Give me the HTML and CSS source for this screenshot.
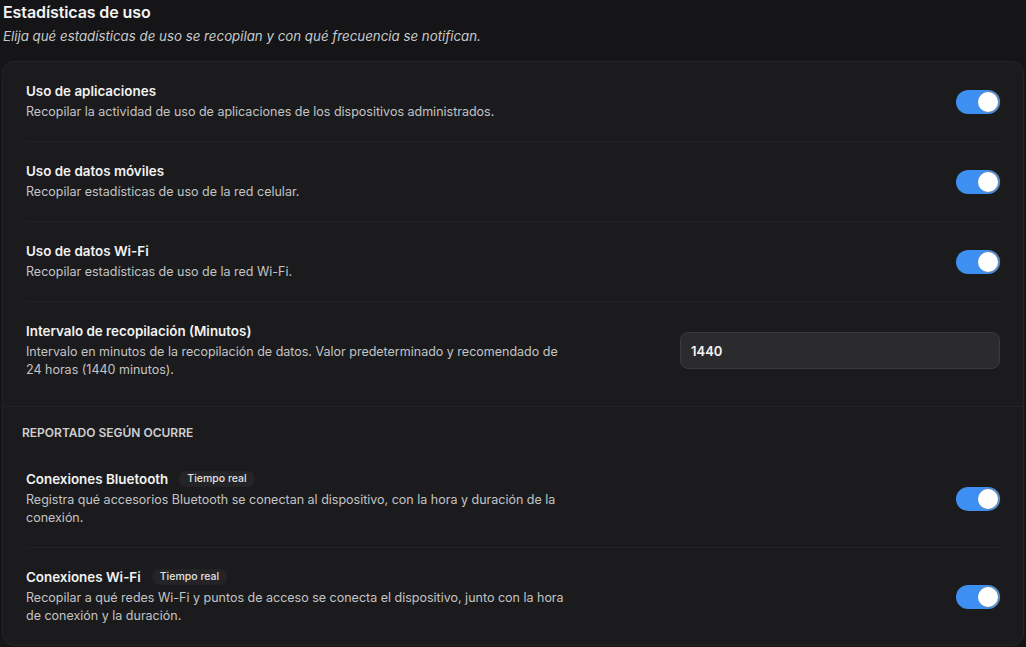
FILE: index.html
```
<!DOCTYPE html>
<html lang="es">
<head>
<meta charset="utf-8">
<title>Estadísticas de uso</title>
<link rel="stylesheet" href="styles.css">
</head>
<body>
<header class="page-head">
  <h1 class="page-title">Estadísticas de uso</h1>
  <p class="page-sub">Elija qué estadísticas de uso se recopilan y con qué frecuencia se notifican.</p>
</header>
<main class="card">
  <section class="section first">
    <div class="row">
      <div class="text">
        <div class="title">Uso de aplicaciones</div>
        <div class="desc">Recopilar la actividad de uso de aplicaciones de los dispositivos administrados.</div>
      </div>
      <span class="toggle"><span class="knob"></span></span>
    </div>
    <div class="row">
      <div class="text">
        <div class="title">Uso de datos móviles</div>
        <div class="desc">Recopilar estadísticas de uso de la red celular.</div>
      </div>
      <span class="toggle"><span class="knob"></span></span>
    </div>
    <div class="row">
      <div class="text">
        <div class="title">Uso de datos Wi-Fi</div>
        <div class="desc">Recopilar estadísticas de uso de la red Wi-Fi.</div>
      </div>
      <span class="toggle"><span class="knob"></span></span>
    </div>
    <div class="row">
      <div class="text">
        <div class="title">Intervalo de recopilación (Minutos)</div>
        <div class="desc">Intervalo en minutos de la recopilación de datos. Valor predeterminado y recomendado de 24 horas (1440 minutos).</div>
      </div>
      <div class="input">1440</div>
    </div>
  </section>
  <section class="section second">
    <div class="section-label">REPORTADO SEGÚN OCURRE</div>
    <div class="row">
      <div class="text">
        <div class="title">Conexiones Bluetooth <span class="badge">Tiempo real</span></div>
        <div class="desc">Registra qué accesorios Bluetooth se conectan al dispositivo, con la hora y duración de la conexión.</div>
      </div>
      <span class="toggle"><span class="knob"></span></span>
    </div>
    <div class="row">
      <div class="text">
        <div class="title">Conexiones Wi-Fi <span class="badge">Tiempo real</span></div>
        <div class="desc">Recopilar a qué redes Wi-Fi y puntos de acceso se conecta el dispositivo, junto con la hora de conexión y la duración.</div>
      </div>
      <span class="toggle"><span class="knob"></span></span>
    </div>
  </section>
</main>
</body>
</html>
```
FILE: styles.css
```
* { box-sizing: border-box; }
html, body { margin: 0; padding: 0; }
body {
  background: #151517;
  color: #f0f0f0;
  font-family: Inter, "Noto Sans", sans-serif;
  padding: 2px 3px 0 2px;
  height: 647px;
  overflow: hidden;
}
.page-head { padding-left: 1px; }
.page-title {
  margin: 0;
  font-size: 16px;
  font-weight: 600;
  line-height: 20px;
  color: #f4f4f4;
  letter-spacing: -0.1px;
}
.page-sub {
  margin: 5px 0 0;
  font-size: 13.3px;
  font-style: italic;
  line-height: 18px;
  color: #c9c9cb;
}
.card {
  margin-top: 16px;
  background: #1b1b1d;
  border: 1px solid #242426;
  border-radius: 12px;
  width: 1022px;
}
.section.first { padding-bottom: 7px; }
.section.second { border-top: 1px solid #232325; padding-top: 19px; }
.section-label {
  margin-left: 19px;
  font-size: 12px;
  font-weight: 600;
  line-height: 14px;
  color: #cfcfd1;
  margin-bottom: 10px;
}
.row {
  display: flex;
  align-items: center;
  justify-content: space-between;
  margin: 0 23px 0 23px;
  padding: 20px 0;
  border-bottom: 1px solid #232325;
}
.section .row:last-child { border-bottom: none; }
.text { max-width: 545px; }
.title {
  font-size: 13.4px;
  font-weight: 600;
  line-height: 18px;
  color: #f2f2f2;
  display: flex;
  align-items: center;
}
.desc {
  margin-top: 3px;
  font-size: 12.5px;
  line-height: 18px;
  color: #c3c3c5;
}
.badge {
  display: inline-block;
  margin-left: 11px;
  padding: 0 8px;
  height: 16px;
  line-height: 16px;
  font-size: 10.5px;
  font-weight: 500;
  color: #e2e2e4;
  background: #242426;
  border-radius: 8px;
}
.toggle {
  flex: none;
  width: 44px;
  height: 24px;
  border-radius: 12px;
  background: #3d8ff2;
  display: flex;
  align-items: center;
  justify-content: flex-end;
  padding-right: 2px;
}
.knob {
  width: 20px;
  height: 20px;
  border-radius: 50%;
  background: #ffffff;
  box-shadow: 1px 0 1px 1px rgba(120, 135, 160, 0.7);
}
.input {
  flex: none;
  width: 320px;
  height: 37px;
  background: #2b2b2d;
  border: 1px solid #3a3a3c;
  border-radius: 8px;
  padding: 0 10px;
  display: flex;
  align-items: center;
  font-size: 13px;
  font-weight: 600;
  color: #f4f4f4;
}
```
